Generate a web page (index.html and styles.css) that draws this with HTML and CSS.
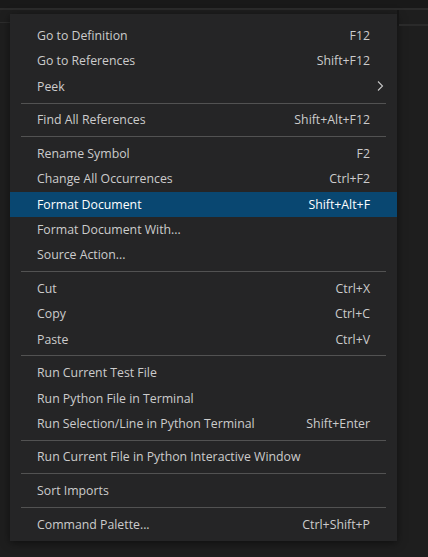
FILE: index.html
```html
<!DOCTYPE html>
<html lang="en">
<head>
    <meta charset="UTF-8">
    <title>Editor Context Menu</title>
    <link rel="stylesheet" href="styles.css">
</head>
<body>
    <div class="titlebar"></div>
    <div class="workbench">
        <div class="left-strip"><div class="tab-line"></div></div>

        <div class="context-menu">
            <div class="menu-item"><span class="label">Go to Definition</span><span class="keybinding">F12</span></div>
            <div class="menu-item"><span class="label">Go to References</span><span class="keybinding">Shift+F12</span></div>
            <div class="menu-item submenu"><span class="label">Peek</span>
                <svg class="chevron" width="10" height="12" viewBox="0 0 10 12"><path d="M3 1.5 L7.5 6 L3 10.5" fill="none" stroke="#c5c5c5" stroke-width="1.1"/></svg>
            </div>
            <div class="separator"></div>
            <div class="menu-item"><span class="label">Find All References</span><span class="keybinding">Shift+Alt+F12</span></div>
            <div class="separator"></div>
            <div class="menu-item"><span class="label">Rename Symbol</span><span class="keybinding">F2</span></div>
            <div class="menu-item"><span class="label">Change All Occurrences</span><span class="keybinding">Ctrl+F2</span></div>
            <div class="menu-item active"><span class="label">Format Document</span><span class="keybinding">Shift+Alt+F</span></div>
            <div class="menu-item"><span class="label">Format Document With...</span></div>
            <div class="menu-item"><span class="label">Source Action...</span></div>
            <div class="separator"></div>
            <div class="menu-item"><span class="label">Cut</span><span class="keybinding">Ctrl+X</span></div>
            <div class="menu-item"><span class="label">Copy</span><span class="keybinding">Ctrl+C</span></div>
            <div class="menu-item"><span class="label">Paste</span><span class="keybinding">Ctrl+V</span></div>
            <div class="separator"></div>
            <div class="menu-item"><span class="label">Run Current Test File</span></div>
            <div class="menu-item"><span class="label">Run Python File in Terminal</span></div>
            <div class="menu-item"><span class="label">Run Selection/Line in Python Terminal</span><span class="keybinding">Shift+Enter</span></div>
            <div class="separator"></div>
            <div class="menu-item"><span class="label">Run Current File in Python Interactive Window</span></div>
            <div class="separator"></div>
            <div class="menu-item"><span class="label">Sort Imports</span></div>
            <div class="separator"></div>
            <div class="menu-item"><span class="label">Command Palette...</span><span class="keybinding">Ctrl+Shift+P</span></div>
        </div>

        <div class="right-strip"><div class="tab-line"></div></div>
    </div>
</body>
</html>
```

FILE: styles.css
```css
body {
    margin: 0;
    padding: 0;
    background: #1e1e1e;
    font-family: "Open Sans", "Noto Sans", sans-serif;
    font-size: 12.3px;
    color: #cccccc;
    height: 557px;
    overflow: hidden;
}

.titlebar {
    height: 8px;
    background: #191919;
    border-bottom: 2px solid #2b2b2b;
}

.workbench {
    display: flex;
    align-items: flex-start;
}

.left-strip {
    width: 10px;
    flex-shrink: 0;
}

.left-strip .tab-line {
    margin-top: 12px;
    height: 1px;
    background: #2c2c2c;
}

.right-strip {
    flex: 1;
    border-left: 2px solid #151515;
}

.right-strip .tab-line {
    margin-top: 14px;
    height: 2px;
    background: #2a2a2a;
}

/* Context menu */
.context-menu {
    margin-top: 4px;
    width: 387px;
    flex-shrink: 0;
    background: #252526;
    padding: 9px 0 4px;
    box-shadow: 0 2px 8px rgba(0, 0, 0, 0.5);
}

.menu-item {
    display: flex;
    align-items: center;
    height: 25.3px;
    padding: 0 27px 0 27px;
}

.menu-item .label {
    flex: 1;
    white-space: nowrap;
}

.menu-item .keybinding {
    white-space: nowrap;
}

.menu-item.active {
    background: #094771;
    color: #ffffff;
}

.menu-item.submenu .chevron {
    margin-right: -15px;
}

.separator {
    height: 1px;
    margin: 3.7px 11px;
    background: #525252;
}
```
